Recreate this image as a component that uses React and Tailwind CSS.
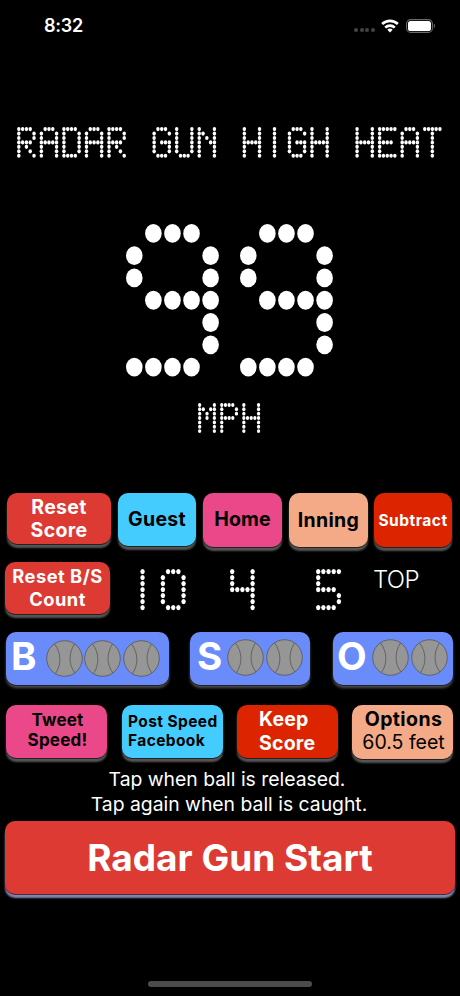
import React from 'react';
import clsx from 'clsx';

// 5x7 lamp patterns for the scoreboard displays
const LAMPS = {
  A: ['.###.', '#...#', '#...#', '#####', '#...#', '#...#', '#...#'],
  D: ['####.', '#...#', '#...#', '#...#', '#...#', '#...#', '####.'],
  E: ['#####', '#....', '#....', '####.', '#....', '#....', '#####'],
  G: ['.###.', '#...#', '#....', '#.###', '#...#', '#...#', '.###.'],
  H: ['#...#', '#...#', '#...#', '#####', '#...#', '#...#', '#...#'],
  I: ['..#..', '..#..', '..#..', '..#..', '..#..', '..#..', '..#..'],
  M: ['#...#', '##.##', '#.#.#', '#.#.#', '#...#', '#...#', '#...#'],
  N: ['#...#', '##..#', '#.#.#', '#..##', '#...#', '#...#', '#...#'],
  P: ['####.', '#...#', '#...#', '####.', '#....', '#....', '#....'],
  R: ['####.', '#...#', '#...#', '####.', '#.#..', '#..#.', '#...#'],
  T: ['#####', '..#..', '..#..', '..#..', '..#..', '..#..', '..#..'],
  U: ['#...#', '#...#', '#...#', '#...#', '#...#', '#...#', '.###.'],
  0: ['.###.', '#...#', '#...#', '#...#', '#...#', '#...#', '.###.'],
  1: ['..#..', '..#..', '..#..', '..#..', '..#..', '..#..', '..#..'],
  4: ['#...#', '#...#', '#...#', '#####', '....#', '....#', '....#'],
  5: ['#####', '#....', '#....', '####.', '....#', '....#', '####.'],
  9: ['.###.', '#...#', '#...#', '.####', '....#', '....#', '####.'],
};

const LedDisplay = ({ value, col, row, advance, rx, ry, className }) => {
  const width = (value.length - 1) * advance + col * 4 + rx * 2;
  const height = row * 6 + ry * 2;

  return (
    <svg
      role="img"
      aria-label={value}
      width={width}
      height={height}
      viewBox={`0 0 ${width} ${height}`}
      className={clsx('block shrink-0 overflow-visible fill-white', className)}
    >
      {value.split('').map((char, i) =>
        (LAMPS[char] || []).map((line, y) =>
          line.split('').map((lamp, x) =>
            lamp === '#' ? (
              <ellipse
                key={`${i}-${y}-${x}`}
                cx={rx + i * advance + x * col}
                cy={ry + y * row}
                rx={rx}
                ry={ry}
              />
            ) : null
          )
        )
      )}
    </svg>
  );
};

const Button = ({ className, shadow = 'shadow-[0_1px_0_0_#222,0_4px_2px_0_#555]', children }) => (
  <button className={clsx('block shrink-0 rounded-[10px] font-bold', shadow, className)}>
    {children}
  </button>
);

const Baseball = () => (
  <svg width="37" height="37" viewBox="0 0 37 37" className="block shrink-0" fill="none" stroke="#5c5c5c" strokeWidth="0.9">
    <circle cx="18.5" cy="18.5" r="17.8" fill="#969696" />
    <path d="M8.5 4C15.5 13 15.5 25 9.5 33.5" />
    <path d="M28.5 4C22.5 13 22.5 25 29 33" />
  </svg>
);

const CountPanel = ({ label, balls, className, ballsClass }) => (
  <div
    className={clsx(
      'flex h-[53px] shrink-0 rounded-[10px] bg-[#6a8cfb] shadow-[0_1px_0_0_#222,0_3px_3px_0_#505050]',
      className
    )}
  >
    <span className="text-[38.5px] leading-[49px] font-bold text-white">{label}</span>
    <div className={clsx('flex gap-[1.6px]', ballsClass)}>
      {Array.from({ length: balls }, (_, i) => (
        <Baseball key={i} />
      ))}
    </div>
  </div>
);

const StatusBar = () => (
  <div className="flex h-[52px] shrink-0 items-center pl-[44px] pr-[24px] text-white">
    <span className="text-[18px] font-semibold leading-none tracking-[-0.2px]">8:32</span>
    <div className="ml-auto flex items-center">
      <div className="mt-[8px] flex gap-[1.7px]">
        {[0, 1, 2, 3].map((dot) => (
          <span key={dot} className="size-[4px] rounded-full bg-[#444]" />
        ))}
      </div>
      <svg width="18" height="14" viewBox="0 0 18 14" className="mb-[1px] ml-[6px]" fill="none" stroke="white" strokeWidth="2.7">
        <path d="M1.1 5A11.4 11.4 0 0 1 16.9 5" />
        <path d="M4.2 8.6A6.9 6.9 0 0 1 13.8 8.6" />
        <path d="M9 13.6L6.3 10.8A3.8 3.8 0 0 1 11.7 10.8Z" fill="white" stroke="none" />
      </svg>
      <svg width="30" height="14" viewBox="0 0 30 14" className="mb-[1px] ml-[7px]">
        <rect x="0.6" y="0.6" width="25.8" height="12.8" rx="4" fill="none" stroke="#6a6a6a" strokeWidth="1.1" />
        <rect x="2" y="2" width="23" height="10" rx="2.6" fill="white" />
        <path d="M27.8 4.8C29.4 5.4 29.4 8.6 27.8 9.2Z" fill="#6a6a6a" />
      </svg>
    </div>
  </div>
);

const App = () => {
  return (
    <div className="flex h-[996px] w-[460px] flex-col overflow-hidden bg-black font-['Inter','Liberation_Sans',sans-serif]">
      <StatusBar />

      <div className="flex h-[166px] shrink-0 items-start pt-[75px] pl-[17px]">
        <LedDisplay value="RADAR GUN HIGH HEAT" col={3.8} row={4.44} advance={22.56} rx={1.75} ry={2.1} />
      </div>
      <div className="flex h-[180px] shrink-0 items-start pt-[6px] pl-[126px]">
        <LedDisplay value="99" col={19.08} row={22.28} advance={114} rx={8.3} ry={9.4} />
      </div>
      <div className="flex h-[95px] shrink-0 items-start pt-[5px] pl-[198px]">
        <LedDisplay value="MPH" col={3.68} row={4.36} advance={22.1} rx={1.65} ry={1.95} />
      </div>

      {/* Score buttons */}
      <div className="flex h-[69px] shrink-0 items-start pl-[7px]">
        <Button className="h-[51px] w-[104px] bg-[#dc3a32] text-[19.5px] leading-[23px] tracking-[0.3px] text-white">
          Reset<br />Score
        </Button>
        <Button className="ml-[7px] h-[53px] w-[78px] bg-[#45ccff] pt-px text-[19.5px] tracking-[0.3px] text-black">Guest</Button>
        <Button className="ml-[7px] h-[54px] w-[79px] bg-[#eb4889] text-[19.5px] tracking-[0.2px] text-black">Home</Button>
        <Button className="ml-[7px] h-[54px] w-[79px] bg-[#f4aa86] pt-[2px] text-[19.5px] tracking-[0.3px] text-black">Inning</Button>
        <Button className="ml-[6px] h-[54px] w-[78px] bg-[#dc2500] pt-px text-[15.5px] tracking-[0.5px] text-white">Subtract</Button>
      </div>

      {/* Current score */}
      <div className="flex h-[70px] shrink-0 items-start pl-[5px]">
        <Button className="h-[52px] w-[105px] bg-[#dc3a32] pb-px text-[18.3px] leading-[23px] tracking-[0.5px] text-white">
          Reset B/S<br />Count
        </Button>
        <LedDisplay value="10" col={5.17} row={6} advance={30.7} rx={2.2} ry={2.6} className="mt-[7.4px] ml-[19.8px]" />
        <LedDisplay value="4" col={5.1} row={6} advance={30.7} rx={2.2} ry={2.6} className="mt-[7.4px] ml-[44px]" />
        <LedDisplay value="5" col={5.17} row={6} advance={30.7} rx={2.2} ry={2.6} className="mt-[7.4px] ml-[61.6px]" />
        <span className="mt-[4px] ml-[32px] text-[24px] font-light leading-[28px] tracking-[-0.7px] text-white">TOP</span>
      </div>

      {/* Balls, strikes, outs */}
      <div className="flex h-[72.5px] shrink-0 items-start pl-[6px]">
        <CountPanel label="B" balls={3} className="w-[163px] pl-[5px]" ballsClass="ml-auto pr-[9px] pt-[8px]" />
        <CountPanel label="S" balls={2} className="ml-[21px] w-[120px] pl-[7px]" ballsClass="ml-auto pr-[7px] pt-[7px]" />
        <CountPanel label="O" balls={2} className="ml-[23px] w-[120px] pl-[4px]" ballsClass="ml-auto pr-[5px] pt-[7px]" />
      </div>

      {/* Share and options */}
      <div className="flex h-[62.5px] shrink-0 items-start pl-[6px]">
        <Button className="h-[53px] w-[101px] bg-[#eb4889] pb-[2px] pl-[2px] text-[17px] leading-[20px] tracking-[0.2px] text-black">
          Tweet<br />Speed!
        </Button>
        <Button className="ml-[15px] h-[53px] w-[101px] bg-[#45ccff] pl-[6px] text-left text-[15.5px] leading-[19px] tracking-[0.4px] text-black">
          <span className="whitespace-nowrap">Post Speed</span><br />Facebook
        </Button>
        <Button className="ml-[14px] h-[53px] w-[101px] bg-[#dc2500] pb-px pl-[22px] text-left text-[19.5px] leading-[24px] tracking-[0.2px] text-white">
          Keep<br />Score
        </Button>
        <Button className="ml-[14px] h-[54px] w-[101px] bg-[#f4aa86] pb-px pl-[2px] text-[19.5px] leading-[23px] text-black">
          <span className="tracking-[0.4px]">Options</span><br />
          <span className="font-normal whitespace-nowrap">60.5 feet</span>
        </Button>
      </div>

      <p className="h-[54px] shrink-0 pr-[2px] text-center text-[19.35px] leading-[24.5px] text-white">
        <span className="pr-[4px]">Tap when ball is released.</span><br />Tap again when ball is caught.
      </p>

      <Button
        shadow="shadow-[0_1px_0_0_#4a2a3a,0_4px_2px_0_#8187ad]"
        className="ml-[5px] h-[73px] w-[450px] bg-[#dc3a32] text-[37px] text-white"
      >
        Radar Gun Start
      </Button>

      <div className="mt-auto mb-[9px] h-[6px] w-[164px] shrink-0 self-center rounded-full bg-[#4c4c4c]" />
    </div>
  );
};

export default App;
